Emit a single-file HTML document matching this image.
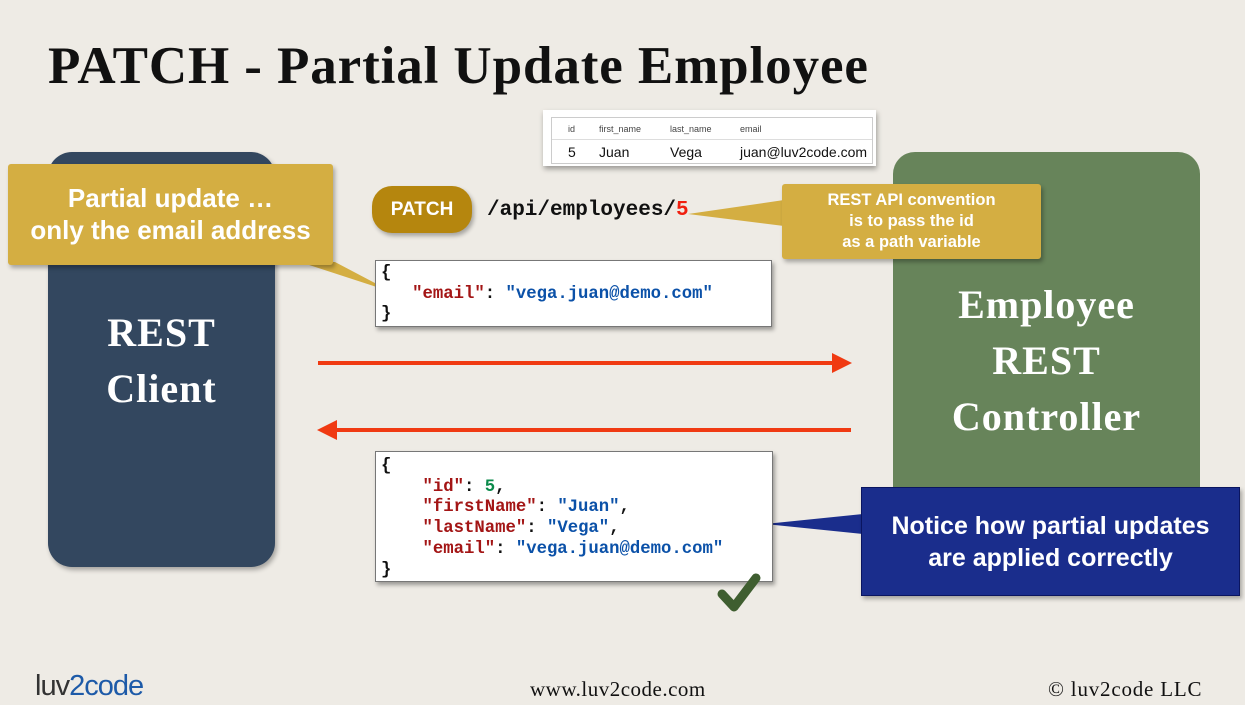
<!DOCTYPE html>
<html><head><meta charset="utf-8"><style>
body{margin:0;width:1245px;height:705px;overflow:hidden;background:#eeebe5;position:relative;font-family:"Liberation Sans",sans-serif}
.a{position:absolute}
.title{left:48px;top:36px;font-family:"Liberation Serif",serif;font-weight:bold;font-size:53px;color:#111;letter-spacing:0.9px;white-space:nowrap}
.code{font-family:"Liberation Mono",monospace;font-weight:bold;font-size:17.3px;line-height:20.7px;white-space:pre;color:#111}
.k{color:#a31515}.s{color:#0b51a8}.n{color:#0a8a4a}
.box{background:#fff;border:1px solid #777;box-shadow:2px 3px 4px rgba(0,0,0,.35)}
.serif{font-family:"Liberation Serif",serif;color:#fff;text-align:center;font-weight:bold;letter-spacing:1px}
</style></head><body>
<div class="a title">PATCH - Partial Update Employee</div>

<div class="a" style="left:48px;top:152px;width:227px;height:415px;background:#33475f;border-radius:24px;box-shadow:2px 3px 5px rgba(0,0,0,.3)"></div>
<div class="a serif" style="left:48px;top:305px;width:227px;font-size:40px;line-height:56px">REST<br>Client</div>

<div class="a" style="left:893px;top:152px;width:307px;height:400px;background:#67845a;border-radius:22px"></div>
<div class="a serif" style="left:893px;top:277px;width:307px;font-size:40px;line-height:56px">Employee<br>REST<br>Controller</div>

<div class="a" style="left:543px;top:110px;width:333px;height:56px;background:#fff;box-shadow:1px 3px 5px rgba(0,0,0,.35)"></div>
<div class="a" style="left:551px;top:117px;width:320px;height:45px;border:1px solid #ccc;font-size:9px;color:#444">
<div class="a" style="left:0;top:0;width:320px;height:21px;border-bottom:1px solid #ddd"></div>
<span class="a" style="left:16px;top:6px">id</span><span class="a" style="left:47px;top:6px">first_name</span><span class="a" style="left:118px;top:6px">last_name</span><span class="a" style="left:188px;top:6px">email</span>
<span class="a" style="left:16px;top:26px;font-size:14px;color:#111">5</span><span class="a" style="left:47px;top:26px;font-size:14px;color:#111">Juan</span><span class="a" style="left:118px;top:26px;font-size:14px;color:#111">Vega</span><span class="a" style="left:188px;top:26px;font-size:14px;color:#111">juan@luv2code.com</span>
</div>

<svg class="a" style="left:0;top:0" width="1245" height="705">
<polygon points="300,262 335,262 392,292" fill="#d4ae42"/>
<polygon points="784,200 784,226 688,214" fill="#d4ae42"/>
<polygon points="863,514 863,534 765,524" fill="#1a2d8c"/>
<line x1="318" y1="363" x2="835" y2="363" stroke="#f03a12" stroke-width="4"/>
<polygon points="852,363 832,353 832,373" fill="#f03a12"/>
<line x1="335" y1="430" x2="851" y2="430" stroke="#f03a12" stroke-width="4"/>
<polygon points="317,430 337,420 337,440" fill="#f03a12"/>
</svg>

<div class="a" style="left:8px;top:164px;width:325px;height:101px;background:#d4ae42;border-radius:3px;box-shadow:2px 3px 4px rgba(0,0,0,.3);color:#fff;font-weight:bold;font-size:26px;line-height:32px;text-align:center;padding-top:18px;box-sizing:border-box">Partial update …<br>only the email address</div>

<div class="a" style="left:372px;top:186px;width:100px;height:47px;background:#b5860e;border-radius:20px;box-shadow:2px 3px 4px rgba(0,0,0,.3);color:#fff;font-weight:bold;font-size:19px;line-height:47px;text-align:center">PATCH</div>
<div class="a" style="left:487px;top:199px;font-family:'Liberation Mono',monospace;font-weight:bold;font-size:21px;color:#111">/api/employees/<span style="color:#f02010">5</span></div>

<div class="a" style="left:782px;top:184px;width:259px;height:75px;background:#d4ae42;border-radius:3px;box-shadow:2px 3px 4px rgba(0,0,0,.3);color:#fff;font-weight:bold;font-size:16.5px;line-height:21px;text-align:center;padding-top:6px;box-sizing:border-box">REST API convention<br>is to pass the id<br>as a path variable</div>

<div class="a box code" style="left:375px;top:260px;width:397px;height:67px;padding:3px 0 0 5px;box-sizing:border-box">{
   <span class="k">"email"</span>: <span class="s">"vega.juan@demo.com"</span>
}</div>

<div class="a box code" style="left:375px;top:451px;width:398px;height:131px;padding:5px 0 0 5px;box-sizing:border-box">{
    <span class="k">"id"</span>: <span class="n">5</span>,
    <span class="k">"firstName"</span>: <span class="s">"Juan"</span>,
    <span class="k">"lastName"</span>: <span class="s">"Vega"</span>,
    <span class="k">"email"</span>: <span class="s">"vega.juan@demo.com"</span>
}</div>

<svg class="a" style="left:700px;top:560px" width="80" height="60">
<path d="M22,34 L34,47 L56,18" fill="none" stroke="#3f5e30" stroke-width="9" stroke-linecap="round" stroke-linejoin="round"/>
</svg>

<div class="a" style="left:861px;top:487px;width:379px;height:109px;background:#1a2d8c;border:1px solid #0a1560;box-shadow:2px 3px 4px rgba(0,0,0,.3);color:#fff;font-weight:bold;font-size:25px;line-height:32px;text-align:center;padding-top:22px;box-sizing:border-box">Notice how partial updates<br>are applied correctly</div>

<div class="a" style="left:35px;top:670px;font-size:29px;color:#333;letter-spacing:-1px">luv<span style="color:#1d5aa8">2</span><span style="color:#1d5aa8">code</span></div>
<div class="a" style="left:530px;top:677px;font-family:'Liberation Serif',serif;font-size:21px;color:#111;letter-spacing:0.5px">www.luv2code.com</div>
<div class="a" style="left:1048px;top:677px;font-family:'Liberation Serif',serif;font-size:21px;color:#111;letter-spacing:0.8px">© luv2code LLC</div>
</body></html>
